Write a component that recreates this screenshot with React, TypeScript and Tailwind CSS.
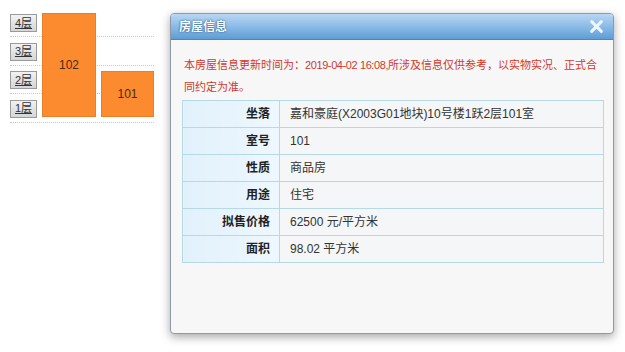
const floors = ["4层", "3层", "2层", "1层"];

const rows = [
  { label: "坐落", value: "嘉和豪庭(X2003G01地块)10号楼1跃2层101室" },
  { label: "室号", value: "101" },
  { label: "性质", value: "商品房" },
  { label: "用途", value: "住宅" },
  { label: "拟售价格", value: "62500 元/平方米" },
  { label: "面积", value: "98.02 平方米" },
];

const font = { fontFamily: '"Liberation Sans", "Noto Sans CJK SC", sans-serif' };

function FloorChart() {
  return (
    <div className="grid grid-cols-[27px_54px_53px] grid-rows-[repeat(4,28.5px)] gap-x-[5px] w-[144px]">
      {floors.map((f, i) => (
        <div
          key={"line" + f}
          className="col-start-1 col-end-4 h-[24px] self-start border-b border-dotted border-[#c8c8c8]"
          style={{ gridRow: i + 1 }}
        />
      ))}
      {floors.map((f, i) => (
        <div
          key={f}
          className="col-start-1 mt-[1px] h-[18px] self-start flex items-center justify-center bg-gradient-to-b from-[#f2f2f2] to-[#d6d6d6] border border-[#9a9a9a] text-[11px] text-[#333] underline"
          style={{ gridRow: i + 1 }}
        >
          {f}
        </div>
      ))}
      <div className="col-start-2 row-start-1 row-end-5 self-start h-[104px] bg-[#fb8b2e] border border-[#e98026] flex items-center justify-center text-[12px] text-[#4a2a10]">
        102
      </div>
      <div className="col-start-3 row-start-3 row-end-5 self-start mt-[1px] h-[46px] bg-[#fb8b2e] border border-[#e98026] flex items-center justify-center text-[12px] text-[#4a2a10]">
        101
      </div>
    </div>
  );
}

function HouseDialog() {
  return (
    <div className="absolute left-[170px] top-[13px] w-[444px] h-[321px] rounded-[4px] border border-[#8e9aa8] bg-[#f7f7f8] shadow-[0_3px_10px_rgba(0,0,0,0.35)] overflow-hidden flex flex-col">
      <div className="h-[26px] shrink-0 flex items-center justify-between pl-[8px] pr-[8px] bg-gradient-to-b from-[#b9d7f3] via-[#8bbbe6] to-[#5e9cd6] border-b border-[#4f86bd]">
        <span
          className="text-[12px] font-bold text-white"
          style={{ textShadow: "0 0 2px #2f5f90, 0 0 1px #2f5f90" }}
        >
          房屋信息
        </span>
        <svg width="15" height="15" viewBox="0 0 14 14" className="mr-[1px]">
          <path d="M2.5 2.5 L11.5 11.5 M11.5 2.5 L2.5 11.5" stroke="#eef6ff" strokeWidth="2.8" strokeLinecap="round" />
        </svg>
      </div>
      <div className="px-[11px] pt-[14px]">
        <div className="pl-[2px] text-[11px] leading-[22px] text-[#d2382a]">
          <div className="whitespace-nowrap">
            本房屋信息更新时间为：<span className="tracking-[-0.4px]">2019-04-02 16:08,</span>所涉及信息仅供参考，以实物实况、正式合
          </div>
          <div>同约定为准。</div>
        </div>
        <table className="mt-[2px] w-[422px] border-collapse text-[12px]">
          <tbody>
            {rows.map((r) => (
              <tr key={r.label} className="h-[27px]">
                <td className="w-[97px] border border-[#b6d9e8] bg-gradient-to-r from-[#e1f1fc] to-[#eef7fd] text-right pr-[9px] font-bold text-[#222]">
                  {r.label}
                </td>
                <td className="border border-[#b6d9e8] bg-[#f5f6f7] pl-[10px] text-[#333]">{r.value}</td>
              </tr>
            ))}
          </tbody>
        </table>
      </div>
    </div>
  );
}

export default function App() {
  return (
    <div className="relative w-[625px] h-[352px] bg-white overflow-hidden" style={font}>
      <div className="pt-[13px] pl-[10px]">
        <FloorChart />
      </div>
      <HouseDialog />
    </div>
  );
}
